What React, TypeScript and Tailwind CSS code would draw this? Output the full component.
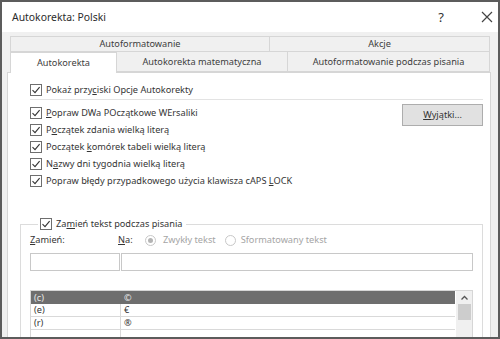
import React from "react";

function Check() {
  return (
    <span className="w-[12px] h-[12px] border border-[#6e6e6e] bg-white flex items-center justify-center shrink-0">
      <svg width="10" height="10" viewBox="0 0 10 10">
        <path d="M1.5 5.2 L4 7.6 L8.6 2.2" fill="none" stroke="#333" strokeWidth="1.1" />
      </svg>
    </span>
  );
}

function CbRow({ children }: { children: React.ReactNode }) {
  return (
    <div className="h-[17px] flex items-center gap-[4px]">
      <Check />
      <span>{children}</span>
    </div>
  );
}

export default function App() {
  return (
    <div className="w-[500px] h-[339px] border-2 border-[#5c5c5c] bg-[#f0f0f0] overflow-hidden flex flex-col font-['Noto_Sans',sans-serif] text-[9.2px] text-[#353535] leading-none">
      {/* title bar */}
      <div className="h-[30px] shrink-0 bg-white flex items-center pl-[10px] pr-[5px]">
        <span className="text-[10.4px] text-[#2a2a2a]">Autokorekta: Polski</span>
        <span className="ml-auto text-[13px] text-[#333] mr-[37px]">?</span>
        <svg width="12" height="12" viewBox="0 0 12 12">
          <path d="M1 1 L11 11 M11 1 L1 11" stroke="#444" strokeWidth="1.2" />
        </svg>
      </div>
      {/* body */}
      <div className="flex-1 pl-[5px] pt-[4px]">
        {/* tab rows */}
        <div className="ml-[3px] w-[480px] flex h-[16px] text-[#3d3d3d]">
          <div className="w-[260px] border border-[#d6d6d6] bg-[#f0f0f0] flex items-center justify-center">Autoformatowanie</div>
          <div className="w-[220px] border border-l-0 border-[#d6d6d6] bg-[#f0f0f0] flex items-center justify-center">Akcje</div>
        </div>
        <div className="ml-[3px] w-[480px] flex h-[20px] text-[#3d3d3d] relative z-10">
          <div className="w-[107px] h-[21px] border border-b-0 border-[#d6d6d6] bg-white flex items-center justify-center">Autokorekta</div>
          <div className="w-[171px] border border-l-0 border-t-0 border-[#d6d6d6] bg-[#f0f0f0] flex items-center justify-center">Autokorekta matematyczna</div>
          <div className="w-[202px] border border-l-0 border-t-0 border-[#d6d6d6] bg-[#f0f0f0] flex items-center justify-center">Autoformatowanie podczas pisania</div>
        </div>
        {/* panel */}
        <div className="w-[484px] h-[280px] border border-[#d6d6d6] bg-white pl-[12px] pr-[7px] pt-[8px]">
          <div className="pl-[10px]">
            <CbRow>
              Pokaż przy<span className="underline">c</span>iski Opcje Autokorekty
            </CbRow>
            <div className="h-px bg-[#e3e3e3] mt-[1px] mb-[4px]" />
            <div className="flex">
              <div className="flex-1">
                <CbRow>
                  <span className="underline">P</span>opraw DWa POczątkowe WErsaliki
                </CbRow>
                <CbRow>
                  P<span className="underline">o</span>czątek zdania wielką literą
                </CbRow>
                <CbRow>
                  Początek <span className="underline">k</span>omórek tabeli wielką literą
                </CbRow>
                <CbRow>
                  N<span className="underline">a</span>zwy dni tygodnia wielką literą
                </CbRow>
                <CbRow>
                  Popraw błędy przypadkowego użycia klawisza cAPS <span className="underline">L</span>OCK
                </CbRow>
              </div>
              <div className="w-[81px] h-[22px] border border-[#adadad] bg-[#e1e1e1] flex items-center justify-center text-[#333]">
                <span>
                  <span className="underline">W</span>yjątki...
                </span>
              </div>
            </div>
          </div>
          {/* group box */}
          <fieldset className="mt-[29px] border border-[#dcdcdc] pl-[9px] pr-[9px] pb-[10px] h-[130px]">
            <legend className="ml-[8px] px-[2px] flex items-center gap-[4px]">
              <Check />
              <span className="pr-[2px]">
                Za<span className="underline">m</span>ień tekst podczas pisania
              </span>
            </legend>
            <div className="flex items-center h-[14px] mt-[3px]">
              <span className="w-[88px]">
                <span className="underline">Z</span>amień:
              </span>
              <span className="w-[27px]">
                <span className="underline">N</span>a:
              </span>
              <span className="w-[11px] h-[11px] rounded-full border border-[#c8c8c8] bg-white flex items-center justify-center">
                <span className="w-[5px] h-[5px] rounded-full bg-[#b4b4b4]" />
              </span>
              <span className="ml-[7px] text-[#a5a5a5]">Zwykły tekst</span>
              <span className="ml-[9px] w-[11px] h-[11px] rounded-full border border-[#c8c8c8] bg-white" />
              <span className="ml-[5px] text-[#a5a5a5]">Sformatowany tekst</span>
            </div>
            <div className="flex mt-[6px] h-[18px]">
              <div className="w-[90px] border border-[#c8c8c8] bg-white" />
              <div className="flex-1 ml-[1px] border border-[#c8c8c8] bg-white" />
            </div>
            <div className="mt-[19px] flex border border-[#d6d6d6] h-[54px]">
              <div className="flex-1 flex flex-col">
                <div className="h-[13px] bg-[#6e6e6e] text-[#e8e8e8] flex items-center">
                  <span className="w-[90px] pl-[3px]">(c)</span>
                  <span className="pl-[3px]">©</span>
                </div>
                {[
                  ["(e)", "€"],
                  ["(r)", "®"],
                  ["", ""],
                ].map(([a, b], i) => (
                  <div key={i} className="h-[13px] border-b border-[#d9d9d9] flex items-center">
                    <span className="w-[90px] h-full pl-[3px] border-r border-[#d9d9d9] flex items-center">{a}</span>
                    <span className="pl-[3px]">{b}</span>
                  </div>
                ))}
              </div>
              <div className="w-[16px] ml-[1px] bg-[#f0f0f0] flex flex-col items-center">
                <svg width="9" height="12" viewBox="0 0 9 12" className="mt-[1px]">
                  <path d="M1.5 7.5 L4.5 4.5 L7.5 7.5" fill="none" stroke="#555" strokeWidth="1.3" />
                </svg>
                <div className="w-[13px] h-[16px] bg-[#cdcdcd]" />
              </div>
            </div>
          </fieldset>
        </div>
      </div>
    </div>
  );
}
